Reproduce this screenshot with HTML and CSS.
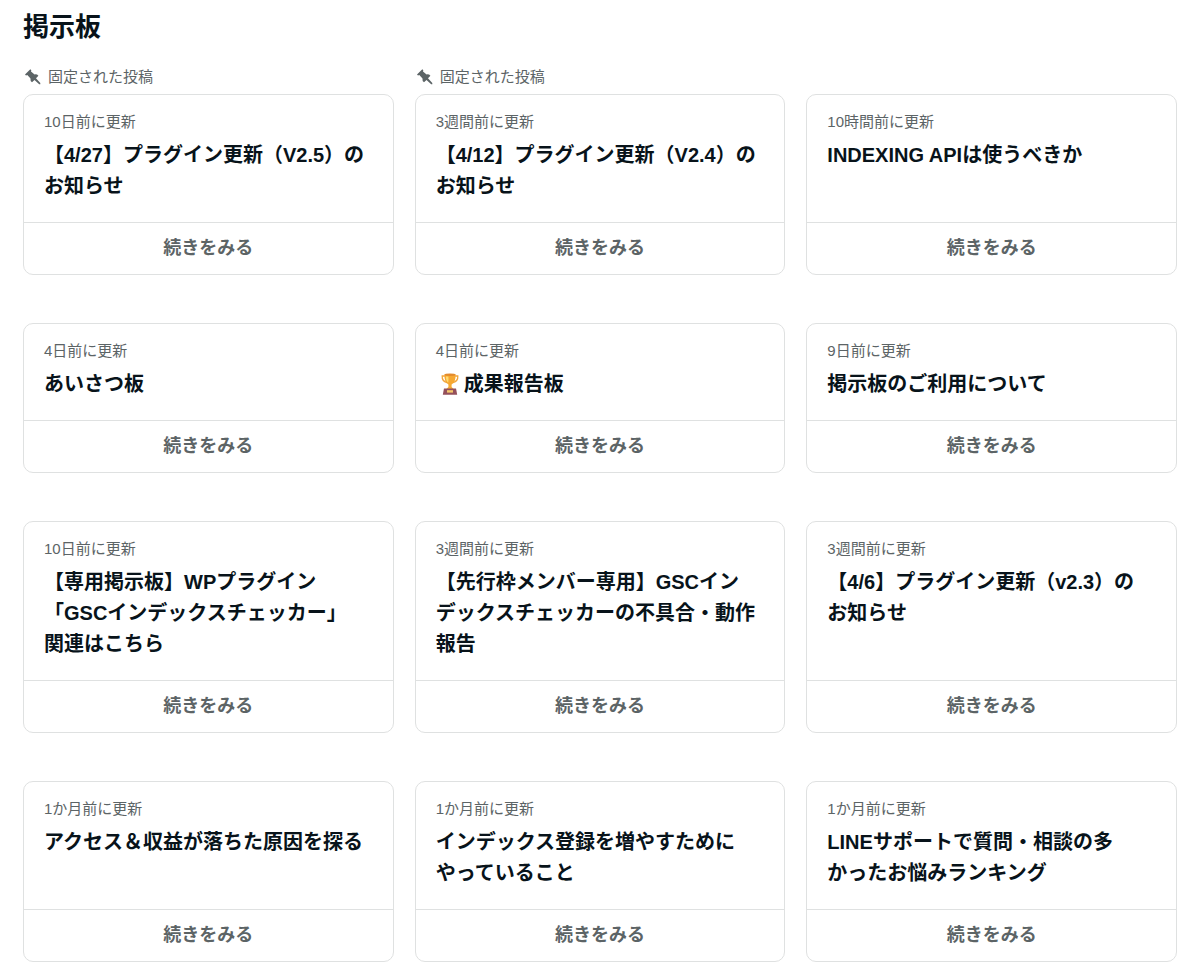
FILE: index.html
```
<!DOCTYPE html>
<html lang="ja">
<head>
  <meta charset="UTF-8">
  <meta name="viewport" content="width=device-width, initial-scale=1.0">
  <title>掲示板</title>
  <link rel="stylesheet" href="styles.css">
</head>
<body>
  <main class="board">
    <h1 class="board-title">掲示板</h1>
    <ul class="list">
      <li class="item">
        <p class="pin">
          <svg class="pin-icon" viewBox="0 0 18 18" aria-hidden="true"><path d="M1 6.6 6.3 1.2 7.3 2.2 7 3.4 10.6 6.4Q13 6 14.4 7.8L12 10.3 16.3 15.1V16.3H15.2L10.5 11.9 8 14.3Q6 12.8 6.5 10.6L3.3 7.1 2 7.6Z"/></svg>
          固定された投稿
        </p>
        <article class="card">
          <div class="card-body">
            <p class="date">10日前に更新</p>
            <h2 class="title">【4/27】プラグイン更新（V2.5）のお知らせ</h2>
          </div>
          <a class="more" href="#">続きをみる</a>
        </article>
      </li>
      <li class="item">
        <p class="pin">
          <svg class="pin-icon" viewBox="0 0 18 18" aria-hidden="true"><path d="M1 6.6 6.3 1.2 7.3 2.2 7 3.4 10.6 6.4Q13 6 14.4 7.8L12 10.3 16.3 15.1V16.3H15.2L10.5 11.9 8 14.3Q6 12.8 6.5 10.6L3.3 7.1 2 7.6Z"/></svg>
          固定された投稿
        </p>
        <article class="card">
          <div class="card-body">
            <p class="date">3週間前に更新</p>
            <h2 class="title">【4/12】プラグイン更新（V2.4）のお知らせ</h2>
          </div>
          <a class="more" href="#">続きをみる</a>
        </article>
      </li>
      <li class="item">
        <article class="card">
          <div class="card-body">
            <p class="date">10時間前に更新</p>
            <h2 class="title">INDEXING APIは使うべきか</h2>
          </div>
          <a class="more" href="#">続きをみる</a>
        </article>
      </li>
      <li class="item">
        <article class="card">
          <div class="card-body">
            <p class="date">4日前に更新</p>
            <h2 class="title">あいさつ板</h2>
          </div>
          <a class="more" href="#">続きをみる</a>
        </article>
      </li>
      <li class="item">
        <article class="card">
          <div class="card-body">
            <p class="date">4日前に更新</p>
            <h2 class="title"><svg class="trophy" viewBox="0 0 18 22" aria-hidden="true">
              <path d="M4 3H1.2Q.8 8.2 6 9.6M14 3h2.8q.4 5.2-4.8 6.6" fill="none" stroke="#f0a43a" stroke-width="1.3"/>
              <path d="M3.5 1.3h11Q15 9 10.6 11.5V14l2 2H5.4l2-2v-2.5Q3 9 3.5 1.3z" fill="#f6a832"/>
              <ellipse cx="9" cy="1.7" rx="5.5" ry="1.2" fill="#e38b2d"/>
              <path d="M5 3.4q0 4.6 2.2 6.4.4-3 .2-6.2z" fill="#ffdc70"/>
              <path d="M3 15.5h12l1.2 6.2H1.8z" fill="#94505a"/>
              <path d="M6 17.2h6v2.4H6z" fill="#f5c86b"/>
            </svg>成果報告板</h2>
          </div>
          <a class="more" href="#">続きをみる</a>
        </article>
      </li>
      <li class="item">
        <article class="card">
          <div class="card-body">
            <p class="date">9日前に更新</p>
            <h2 class="title">掲示板のご利用について</h2>
          </div>
          <a class="more" href="#">続きをみる</a>
        </article>
      </li>
      <li class="item">
        <article class="card">
          <div class="card-body">
            <p class="date">10日前に更新</p>
            <h2 class="title">【専用掲示板】WPプラグイン「GSCインデックスチェッカー」関連はこちら</h2>
          </div>
          <a class="more" href="#">続きをみる</a>
        </article>
      </li>
      <li class="item">
        <article class="card">
          <div class="card-body">
            <p class="date">3週間前に更新</p>
            <h2 class="title">【先行枠メンバー専用】GSCインデックスチェッカーの不具合・動作報告</h2>
          </div>
          <a class="more" href="#">続きをみる</a>
        </article>
      </li>
      <li class="item">
        <article class="card">
          <div class="card-body">
            <p class="date">3週間前に更新</p>
            <h2 class="title">【4/6】プラグイン更新（v2.3）のお知らせ</h2>
          </div>
          <a class="more" href="#">続きをみる</a>
        </article>
      </li>
      <li class="item">
        <article class="card">
          <div class="card-body">
            <p class="date">1か月前に更新</p>
            <h2 class="title">アクセス＆収益が落ちた原因を探る</h2>
          </div>
          <a class="more" href="#">続きをみる</a>
        </article>
      </li>
      <li class="item">
        <article class="card">
          <div class="card-body">
            <p class="date">1か月前に更新</p>
            <h2 class="title">インデックス登録を増やすためにやっていること</h2>
          </div>
          <a class="more" href="#">続きをみる</a>
        </article>
      </li>
      <li class="item">
        <article class="card">
          <div class="card-body">
            <p class="date">1か月前に更新</p>
            <h2 class="title">LINEサポートで質問・相談の多かったお悩みランキング</h2>
          </div>
          <a class="more" href="#">続きをみる</a>
        </article>
      </li>
    </ul>
  </main>
</body>
</html>
```

FILE: styles.css
```
*{margin:0; padding:0; box-sizing:border-box; list-style:none;}
body{background:#fff; color:#08131a; font-family:"Liberation Sans","Noto Sans CJK JP",sans-serif;}

.board{padding:7px 23px 16px;}
.board-title{font-size:26px; line-height:40px; margin-bottom:19px;}

.list{display:grid; grid-template-columns:repeat(3, minmax(0, 1fr)); gap:20px 21px;}
/* 28px above every card is kept for the pin label */
.item{display:grid; grid-template-rows:28px 1fr;}

.pin{display:flex; align-items:center; gap:6px; height:21px; padding-left:1px; font-size:15px; line-height:21px; color:#5c6466;}
.pin-icon{width:18px; height:18px; fill:#5c6466;}

.card{grid-row:2; display:flex; flex-direction:column; border:1px solid #dfe1e1; border-radius:10px;}
.card-body{flex:1; padding:16px 28px 20px 20px;}
.date{margin-bottom:8px; font-size:15px; line-height:21px; color:#5c6466;}
.title{font-size:20px; line-height:31px; font-weight:bold; line-break:strict;}
.trophy{width:18px; height:22px; margin:0 5px; vertical-align:-4px;}
.more{display:block; border-top:1px solid #dfe1e1; font-size:18px; line-height:51px; font-weight:bold; text-align:center; text-decoration:none; color:#5c6466;}
```
